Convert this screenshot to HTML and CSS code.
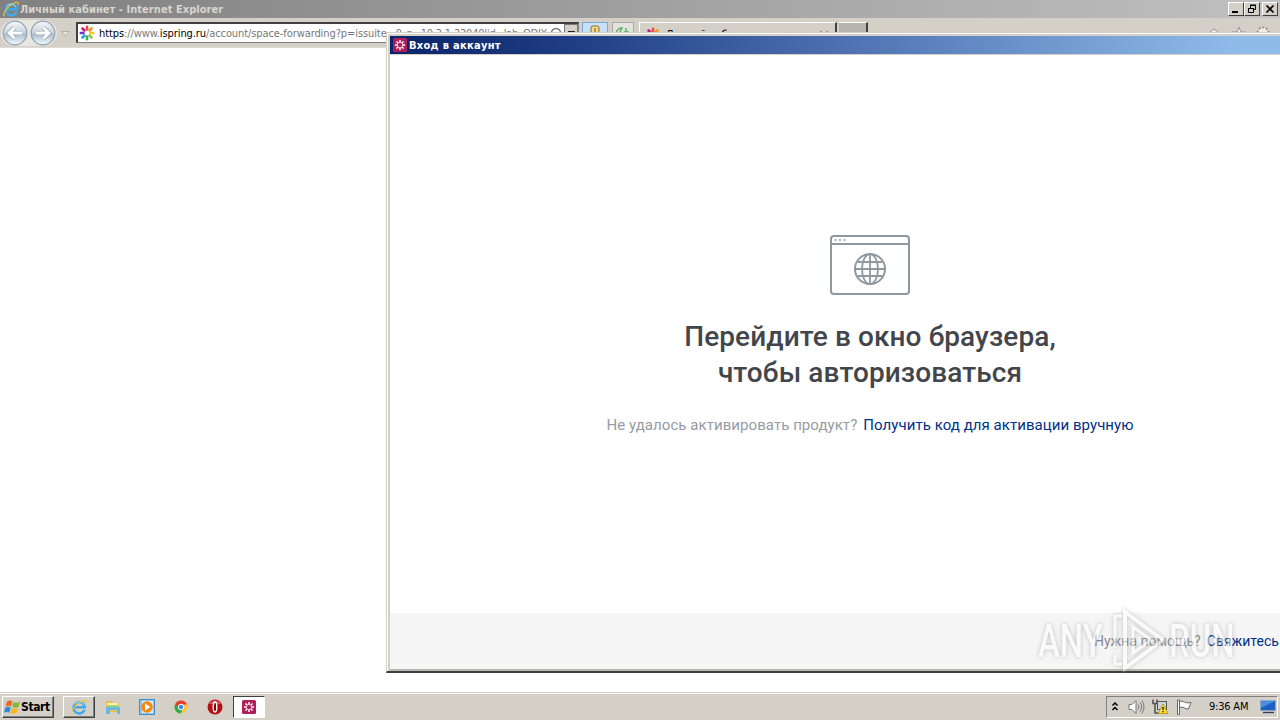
FILE: index.html
```html
<!DOCTYPE html>
<html lang="ru">
  <head>
    <meta charset="utf-8">
    <title>Личный кабинет - Internet Explorer</title>
    <link rel="stylesheet" href="styles.css">
  </head>

  <body>
    <!-- shared icons -->
    <svg class="defs" width="0" height="0">
      <defs>
        <symbol id="ie" viewBox="0 0 18 18">
          <path d="M14.500 11.800A5.600 5.600 0 1 1 14.800 9.300H5" fill="none" stroke="#3fa9ec" stroke-width="2.500" />
          <path d="M14 7A5.800 5.800 0 0 0 4.500 6.200" fill="none" stroke="#9adcfb" stroke-width="1" />
          <path d="M2.500 16.200C0 15 4 8 9.500 4.500S17.300 2 15.800 5" fill="none" stroke="#f2c236" stroke-width="1.200" />
        </symbol>
        <symbol id="flower" viewBox="0 0 16 16">
          <g fill="none" stroke-width="2.600" stroke-linecap="round">
            <path d="M8 4.500V1.800" stroke="#f04a28" />
            <path d="M10.500 5.500l2-2" stroke="#f7941e" />
            <path d="M11.500 8h2.700" stroke="#ffc20e" />
            <path d="M10.500 10.500l2 2" stroke="#8cc63f" />
            <path d="M8 11.500v2.700" stroke="#39b54a" />
            <path d="M5.500 10.500l-2 2" stroke="#29a0e0" />
            <path d="M4.500 8H1.800" stroke="#6a30c8" />
            <path d="M5.500 5.500l-2-2" stroke="#c01c8c" />
          </g>
          <circle cx="8" cy="8" r="2.300" fill="#fff" />
        </symbol>
        <symbol id="ispring" viewBox="0 0 14 14">
          <rect width="14" height="14" rx="1.500" fill="#b01f5c" />
          <path d="M7 2v3M10.500 3.500l-2 2M12 7H9M10.500 10.500l-2-2M7 12V9M3.500 10.500l2-2M2 7h3M3.500 3.500l2 2" stroke="#fff" stroke-width="1.500" />
          <circle cx="7" cy="7" r="1.700" fill="#b01f5c" />
        </symbol>
      </defs>
    </svg>

    <div class="browser">
      <div class="titlebar">
        <svg width="18" height="18"><use href="#ie" /></svg>
        <span class="caption">Личный кабинет - Internet Explorer</span>
        <div class="controls">
          <button><svg width="14" height="12"><path d="M3 9h6" stroke="#000" stroke-width="2" /></svg></button>
          <button><svg width="14" height="12"><path d="M5.500 5V2.500h5v4H9M5 2h6M3.500 5.500h5v4h-5zM3 5.500h6" fill="none" stroke="#000" /></svg></button>
          <button class="close"><svg width="14" height="12"><path d="M3.500 2.500l7 7M10.500 2.500l-7 7" stroke="#000" stroke-width="1.700" /></svg></button>
        </div>
      </div>

      <div class="toolbar">
        <svg class="nav" width="74" height="28" viewBox="0 0 74 28">
          <defs>
            <linearGradient id="orb" x2="0" y2="1">
              <stop offset="0" stop-color="#f5f8fa" />
              <stop offset=".48" stop-color="#c8d4dd" />
              <stop offset=".55" stop-color="#a9bccb" />
              <stop offset="1" stop-color="#f4fcff" />
            </linearGradient>
          </defs>
          <rect x="1" y="1" width="56" height="26" rx="13" fill="#e8e6e1" />
          <circle cx="15" cy="14" r="11.800" fill="url(#orb)" stroke="#8ea1b2" stroke-width="1.200" />
          <circle cx="43" cy="14" r="11.800" fill="url(#orb)" stroke="#8ea1b2" stroke-width="1.200" />
          <path d="M22 14H10M14.500 8.800L9 14l5.500 5.200M36 14h12M43.500 8.800L49 14l-5.500 5.200" fill="none" stroke="#8fa2b3" stroke-width="4.200" />
          <path d="M22 14H10M14.500 8.800L9 14l5.500 5.200M36 14h12M43.500 8.800L49 14l-5.500 5.200" fill="none" stroke="#fff" stroke-width="2.800" />
          <path d="M61.500 12.500h8l-4 4.500z" fill="#e8e5df" stroke="#aaa69c" stroke-width=".8" />
        </svg>
        <div class="address">
          <svg width="16" height="16"><use href="#flower" /></svg>
          <span class="url"><b>https</b>://www.<b>ispring.ru</b>/account/space-forwarding?p=issuite</span>
          <span class="url rest">9_p=10.3.1.23040lid=lab_ODIX</span>
          <svg class="search" width="14" height="16"><circle cx="7" cy="8" r="4.500" fill="none" stroke="#777" stroke-width="1.600" /></svg>
          <span class="drop"></span>
        </div>
        <div class="tool lock"><svg width="24" height="18"><rect x="8" y="3" width="8" height="14" rx="2" fill="#f3d98a" stroke="#8d6a28" /><path d="M12 5v9" stroke="#6b5320" /></svg></div>
        <div class="tool refresh"><svg width="20" height="18"><path d="M3 10c1-4 4-5 6-5l-3 6M13 5v7M11 9h5" fill="none" stroke="#5faf66" stroke-width="1.500" /></svg></div>
        <div class="tab">
          <svg width="16" height="16"><use href="#flower" /></svg>
          <span>Личный кабинет</span>
          <span class="x">×</span>
        </div>
        <div class="newtab"></div>
        <svg class="cmds" width="66" height="20" fill="#eee" stroke="#99958c">
          <path d="M3 9l5-4 5 4v6H3zM33 3l2 5h5l-4 3 2 5-5-3-5 3 2-5-4-3h5z" />
          <circle cx="57" cy="9" r="5.500" stroke-dasharray="2 1.500" stroke-width="2" />
        </svg>
      </div>
    </div>

    <div class="dialog">
      <div class="dialog-title">
        <svg width="14" height="14"><use href="#ispring" /></svg>
        <span>Вход в аккаунт</span>
      </div>
      <div class="dialog-body">
        <svg class="globe" width="80" height="60" fill="none" stroke="#8f979f" stroke-width="2">
          <rect x="1" y="1" width="78" height="58" rx="3" />
          <path d="M1 9h78" />
          <path d="M4.500 5h2M9 5h2M13.500 5h2" stroke-width="1.600" />
          <circle cx="40" cy="34" r="15" />
          <ellipse cx="40" cy="34" rx="8" ry="15" stroke-width="1.800" />
          <path d="M40 19v30M25 34h30M28 27h24M28 41h24" stroke-width="1.800" />
        </svg>
        <h1>Перейдите в окно браузера,<br>чтобы авторизоваться</h1>
        <p class="hint"><span>Не удалось активировать продукт?</span><a>Получить код для активации вручную</a></p>
      </div>
      <div class="dialog-footer">
        <p class="help"><span>Нужна помощь?</span><a>Свяжитесь</a></p>
      </div>
    </div>

    <div class="watermark">
      <span>ANY</span>
      <svg width="60" height="66" viewBox="0 0 60 66" fill="none" stroke="#fff" stroke-width="4">
        <path d="M16 5L54 33 16 61z" />
        <path d="M24 20l18 13-18 13z" stroke-width="3" />
        <path d="M13 9H6v32M6 48v9h7" stroke-width="3" />
      </svg>
      <span>RUN</span>
    </div>

    <div class="taskbar">
      <div class="start">
        <svg width="17" height="16" viewBox="0 0 17 16">
          <path d="M3 2.500c2-1.500 4-1 5.500 0L7 7.500c-2-1-3.500-1-5.500 0z" fill="#ee6a24" />
          <path d="M9.500 3c2 1 4 1 6.500-.3L14.500 8c-2 1-4 1-6.300 0z" fill="#83b735" />
          <path d="M1.200 8.700c2-1.200 4-1 5.500 0l-1.500 5c-1.700-1-3.500-1-5.200 0z" fill="#2f86dd" />
          <path d="M7.800 9c2 1 4 1 6.400 0l-1.500 5c-2 1.200-4.400 1-6.300 0z" fill="#f8b81c" />
        </svg>
        <span>Start</span>
      </div>
      <div class="task raised"><svg width="18" height="18"><use href="#ie" /></svg></div>
      <div class="task">
        <svg width="16" height="16">
          <path d="M1 2h6l1 2h6v9H1z" fill="#e9bd55" />
          <path d="M2 4h11v4H2z" fill="#fff1ad" />
          <path d="M1 8h14v7h-3v-4H5v4H1z" fill="#67b9e6" />
          <path d="M2 6h12v2H2z" fill="#a8d66d" />
        </svg>
      </div>
      <div class="task">
        <svg width="16" height="16">
          <rect x=".5" y=".5" width="15" height="15" fill="#8fc4ec" stroke="#3f8dcc" />
          <rect x="3" y="2" width="11" height="12" fill="#d6ecfa" />
          <circle cx="8" cy="8" r="5.800" fill="#f28b16" />
          <path d="M6 4.500l5.500 3.500L6 11.500z" fill="#fff" />
        </svg>
      </div>
      <div class="task">
        <svg width="14" height="14" viewBox="0 0 14 14">
          <circle cx="7" cy="7" r="6.500" fill="#fcc934" />
          <path d="M1.200 4A6.500 6.500 0 0 1 13 4.500H7L4 8.500z" fill="#e33b2e" />
          <path d="M1.200 4A6.500 6.500 0 0 0 6.500 13.500L9.200 9 4.500 8.500z" fill="#2da94f" />
          <circle cx="7" cy="7" r="2.800" fill="#4285f4" stroke="#fff" />
        </svg>
      </div>
      <div class="task">
        <svg width="16" height="16">
          <circle cx="8" cy="8" r="7.500" fill="#b80f16" />
          <path d="M2 5a7 7 0 0 1 12 0z" fill="#d95b5b" />
          <ellipse cx="8" cy="8" rx="1.800" ry="5" fill="#7c0508" stroke="#fff" stroke-width="1.400" />
        </svg>
      </div>
      <div class="task active"><svg width="14" height="14"><use href="#ispring" /></svg></div>

      <div class="tray">
        <svg width="8" height="11"><path d="M1.500 4.500L4 2l2.500 2.500M1.500 9L4 6.500 6.500 9" fill="none" stroke="#000" stroke-width="1.500" /></svg>
        <svg class="sound" width="17" height="16" fill="#fff" stroke="#77777a">
          <path d="M1 5.500h3l4-4v13l-4-4H1z" />
          <path d="M10 5.500q2 2.500 0 5M12 3.500q3.500 4.500 0 9M14 1.500q4 6.500 0 13" fill="none" />
        </svg>
        <svg class="net" width="17" height="17">
          <path d="M1 1.500v4h4v-4M3 5v10h4" fill="none" stroke="#555" stroke-width="1.600" />
          <rect x="5.500" y="3.500" width="9" height="8" fill="#c9d3da" stroke="#555" />
          <path d="M11 6l5 9.500H6z" fill="#ffe23c" stroke="#b08d00" stroke-width=".8" />
          <path d="M11 9v3M11 13v1.200" stroke="#000" stroke-width="1.200" />
        </svg>
        <svg class="flag" width="17" height="16" fill="#fff" stroke="#66666a">
          <path d="M1.500 1v14.500h2V1zM3.500 2.500q3-1 5 .5t6.500.5l-2.500 6.500q-3 0-4.500-1.200t-4.500-.3z" />
        </svg>
        <span class="clock">9:36 AM</span>
        <svg width="16" height="15">
          <rect x=".5" y="1.500" width="15" height="10" fill="#1c5fc0" stroke="#8aa6cc" />
          <path d="M1 2h14L1 9z" fill="#4a8ee0" />
          <path d="M3 13.500h11" stroke="#30405c" stroke-width="1.400" />
        </svg>
      </div>
    </div>
  </body>
</html>
```
FILE: styles.css
```css
body {
  margin: 0;
  width: 1280px;
  height: 720px;
  display: flex;
  flex-direction: column;
  position: relative;
  overflow: hidden;
  background-color: white;
  font-family: "DejaVu Sans Condensed", "DejaVu Sans", sans-serif;
  font-size: 11px;
}

svg {
  display: block;
  flex: none;
}

.defs {
  position: absolute;
}

/* browser window */
.browser {
  height: 692px;
  white-space: nowrap;
}

.titlebar {
  display: flex;
  align-items: center;
  height: 18px;
  padding-left: 2px;
  background: linear-gradient(to right, #808080, #c0c0c0);
  color: #d8d5ce;
}

.caption {
  font-weight: bold;
  letter-spacing: 0.05px;
}

.controls {
  display: flex;
  margin-left: auto;
  padding-right: 2px;
}

.controls button {
  width: 16px;
  height: 14px;
  padding: 0;
  border: 1px solid;
  border-color: white #404040 #404040 white;
  background-color: #d4d0c8;
}

.controls .close {
  margin-left: 2px;
}

.toolbar {
  display: flex;
  height: 29px;
  background-color: #d4d0c8;
  border-bottom: 1px solid #dedbd5;
}

.nav {
  margin-top: 1px;
}

.address {
  display: flex;
  align-items: center;
  box-sizing: border-box;
  width: 503px;
  height: 21px;
  margin: 4px 0 0 2px;
  padding-left: 1px;
  border: 1px solid #808080;
  border-top: 2px solid #404040;
  border-left: 2px solid #404040;
  background-color: white;
  color: #777;
}

.url {
  margin-left: 4px;
  letter-spacing: -0.09px;
}

.url b {
  font-weight: normal;
  color: black;
}

.rest {
  margin-left: 9px;
  letter-spacing: -0.2px;
}

.search {
  margin-left: auto;
}

.drop {
  width: 12px;
  height: 17px;
  margin-left: 1px;
  border: 1px solid #777;
  background: linear-gradient(#222, #222) 3px 6px / 7px 2px no-repeat #d4d0c8;
}

.tool {
  height: 20px;
  margin-top: 4px;
  border: 1px solid #aaa;
  background-color: #e4e3df;
}

.lock {
  width: 24px;
  margin-left: 3px;
  border-color: #77a8d8;
  background-color: #c8e0f8;
}

.refresh {
  width: 20px;
  margin-left: 4px;
}

.tab {
  display: flex;
  align-items: center;
  box-sizing: border-box;
  width: 198px;
  height: 24px;
  margin: 4px 0 0 5px;
  padding: 0 5px;
  border-top: 1px solid white;
  border-left: 1px solid white;
  border-right: 2px solid #404040;
}

.tab span {
  margin-left: 5px;
}

.tab .x {
  margin-left: auto;
  color: #888;
  font-size: 16px;
}

.newtab {
  width: 27px;
  height: 24px;
  margin: 4px 0 0 2px;
  border-top: 1px solid white;
  border-right: 2px solid #404040;
  background-color: #b7b4ad;
}

.cmds {
  margin: 6px 8px 0 auto;
}

/* sign-in window, runs past the right edge of the screen */
.dialog {
  position: absolute;
  left: 386px;
  top: 32px;
  width: 894px;
  height: 641px;
  box-sizing: border-box;
  display: flex;
  flex-direction: column;
  overflow: hidden;
  border: 1px solid #d4d0c8;
  border-right: none;
  border-bottom: 2px solid #404040;
  box-shadow: inset 1px 1px white, inset 3px 3px #d4d0c8, inset 0 -2px #b8b6b0;
  padding: 3px 0 2px 3px;
  background-color: white;
  white-space: nowrap;
}

.dialog-title {
  display: flex;
  align-items: center;
  height: 18px;
  padding-left: 3px;
  background: linear-gradient(to right, #0a246a, #1f3d84 20%, #4d6fb0 50%, #8fbbe9 95%);
  border-bottom: 1px solid #d4d0c8;
  color: white;
  font-weight: bold;
}

.dialog-title span {
  margin-left: 2px;
  letter-spacing: 0.3px;
}

.dialog-body {
  width: 960px;
  flex: 1;
  display: flex;
  flex-direction: column;
  align-items: center;
  font-family: Roboto, sans-serif;
}

.globe {
  margin-top: 180px;
}

h1 {
  margin: 24px 0 0;
  color: #42464b;
  font-size: 28px;
  font-weight: 500;
  line-height: 36px;
  letter-spacing: 0.1px;
  text-align: center;
}

.hint,
.help {
  display: flex;
  gap: 6px;
  margin: 0;
  color: #959ca3;
  font-family: Roboto, sans-serif;
  font-size: 15px;
  line-height: 20px;
}

.hint {
  margin-top: 24px;
  letter-spacing: 0.06px;
}

.hint a,
.help a {
  color: #003087;
}

.dialog-footer {
  height: 56px;
  background-color: #f5f5f5;
}

.help {
  padding: 18px 0 0 704px;
  color: #858b91;
  font-size: 14px;
}

/* logo laid over the lower right corner */
.watermark {
  position: absolute;
  left: 1038px;
  top: 607px;
  display: flex;
  align-items: center;
  color: white;
  font-family: Roboto, sans-serif;
  font-size: 47px;
  font-weight: 500;
  opacity: 0.5;
  filter: drop-shadow(0 0 2px #888);
}

.watermark span {
  width: 71px;
  transform: scaleX(0.7);
  transform-origin: left;
}

/* taskbar */
.taskbar {
  display: flex;
  align-items: center;
  box-sizing: border-box;
  height: 28px;
  padding: 0 2px;
  border-top: 1px solid #d4d0c8;
  box-shadow: inset 0 1px white;
  background-color: #d4d0c8;
}

.start,
.raised {
  border: 1px solid;
  border-color: white #404040 #404040 white;
  box-shadow: inset -1px -1px #808080;
}

.start {
  display: flex;
  align-items: center;
  box-sizing: border-box;
  width: 52px;
  height: 22px;
  padding-left: 1px;
  font-size: 12px;
  font-weight: bold;
  letter-spacing: -0.4px;
}

.task {
  display: flex;
  align-items: center;
  justify-content: center;
  box-sizing: border-box;
  width: 32px;
  height: 22px;
  margin-right: 2px;
}

.raised {
  margin-left: 9px;
}

.active {
  border: 1px solid;
  border-color: #404040 white white #404040;
  background-color: white;
}

.tray {
  display: flex;
  align-items: center;
  box-sizing: border-box;
  width: 172px;
  height: 22px;
  margin-left: auto;
  padding-left: 4px;
  border: 1px solid;
  border-color: #808080 white white #808080;
}

.sound {
  margin-left: 9px;
}

.net {
  margin-left: 7px;
}

.flag {
  margin-left: 7px;
}

.clock {
  width: 41px;
  margin: 0 10px 0 16px;
  letter-spacing: -0.2px;
  white-space: nowrap;
}
```
